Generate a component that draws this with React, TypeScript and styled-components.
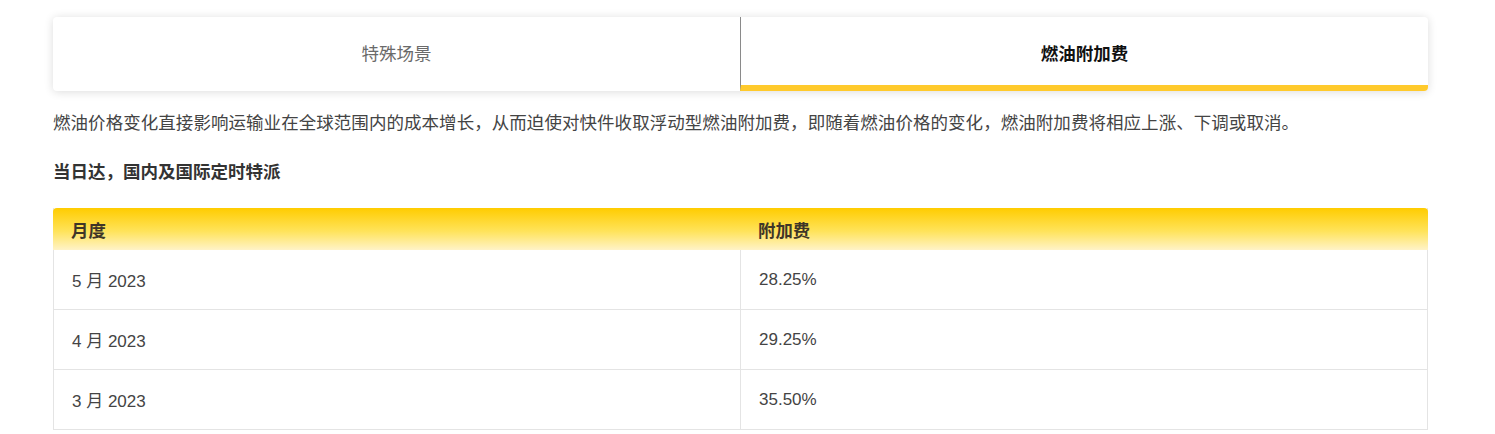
import React from "react";
import styled, { createGlobalStyle } from "styled-components";

const Global = createGlobalStyle`
  body {
    margin: 0;
    background: #ffffff;
    font-family: "Liberation Sans", "Noto Sans CJK SC", sans-serif;
  }
`;

const Page = styled.div`
  width: 1375px;
  padding: 17px 0 0 53px;
`;

const Tabs = styled.div`
  display: grid;
  grid-template-columns: 687px 1fr;
  height: 74px;
  background: #fff;
  border-radius: 4px;
  box-shadow: 0 1px 10px rgba(0, 0, 0, 0.14);
  overflow: hidden;
`;

const Tab = styled.div<{ $active?: boolean }>`
  display: flex;
  align-items: center;
  justify-content: center;
  font-family: "Noto Sans CJK SC", sans-serif;
  font-size: 17.5px;
  font-weight: ${(p) => (p.$active ? 700 : 400)};
  color: ${(p) => (p.$active ? "#111" : "#6a6a6a")};
  border-left: ${(p) => (p.$active ? "1px solid #8a8a8a" : "none")};
  border-bottom: ${(p) => (p.$active ? "6px solid #ffca2c" : "none")};
  padding: ${(p) => (p.$active ? "2px 0 0" : "0 0 4px")};
  box-sizing: border-box;
`;

const Para = styled.p`
  margin: 17px 0 0;
  font-family: "Noto Sans CJK SC", sans-serif;
  font-size: 17.5px;
  letter-spacing: 0.05px;
  line-height: 28px;
  color: #444;
`;

const Heading = styled.h4`
  margin: 21px 0 0;
  font-family: "Noto Sans CJK SC", sans-serif;
  font-size: 17.5px;
  line-height: 28px;
  font-weight: 700;
  color: #333;
`;

const Table = styled.div`
  margin-top: 23px;
  display: grid;
  grid-template-columns: 686px 1fr;
  border-left: 1px solid #e4e4e4;
  border-right: 1px solid #e4e4e4;
`;

const HeadCell = styled.div<{ $first?: boolean }>`
  height: 42px;
  display: flex;
  align-items: center;
  padding-left: 18px;
  font-family: "Noto Sans CJK SC", sans-serif;
  font-size: 17.4px;
  font-weight: 700;
  color: #3f3628;
  background: linear-gradient(to bottom, #ffcc00 0%, #ffe35a 55%, #fff3c8 100%);
  border-top-left-radius: ${(p) => (p.$first ? "4px" : "0")};
  border-top-right-radius: ${(p) => (p.$first ? "0" : "4px")};
  margin-left: ${(p) => (p.$first ? "-1px" : "0")};
  margin-right: ${(p) => (p.$first ? "0" : "-1px")};
`;

const Cell = styled.div<{ $first?: boolean }>`
  height: 60px;
  box-sizing: border-box;
  display: flex;
  align-items: center;
  padding-left: 18px;
  font-family: "Liberation Sans", "Noto Sans CJK SC", sans-serif;
  font-size: 17px;
  color: #444;
  border-bottom: 1px solid #e4e4e4;
  border-left: ${(p) => (p.$first ? "none" : "1px solid #e4e4e4")};
`;

const rows = [
  ["5 月 2023", "28.25%"],
  ["4 月 2023", "29.25%"],
  ["3 月 2023", "35.50%"],
];

export default function App() {
  return (
    <>
      <Global />
      <Page>
        <Tabs>
          <Tab>特殊场景</Tab>
          <Tab $active>燃油附加费</Tab>
        </Tabs>
        <Para>
          燃油价格变化直接影响运输业在全球范围内的成本增长，从而迫使对快件收取浮动型燃油附加费，即随着燃油价格的变化，燃油附加费将相应上涨、下调或取消。
        </Para>
        <Heading>当日达，国内及国际定时特派</Heading>
        <Table>
          <HeadCell $first>月度</HeadCell>
          <HeadCell>附加费</HeadCell>
          {rows.map(([m, v]) => (
            <React.Fragment key={m}>
              <Cell $first>{m}</Cell>
              <Cell>{v}</Cell>
            </React.Fragment>
          ))}
        </Table>
      </Page>
    </>
  );
}
